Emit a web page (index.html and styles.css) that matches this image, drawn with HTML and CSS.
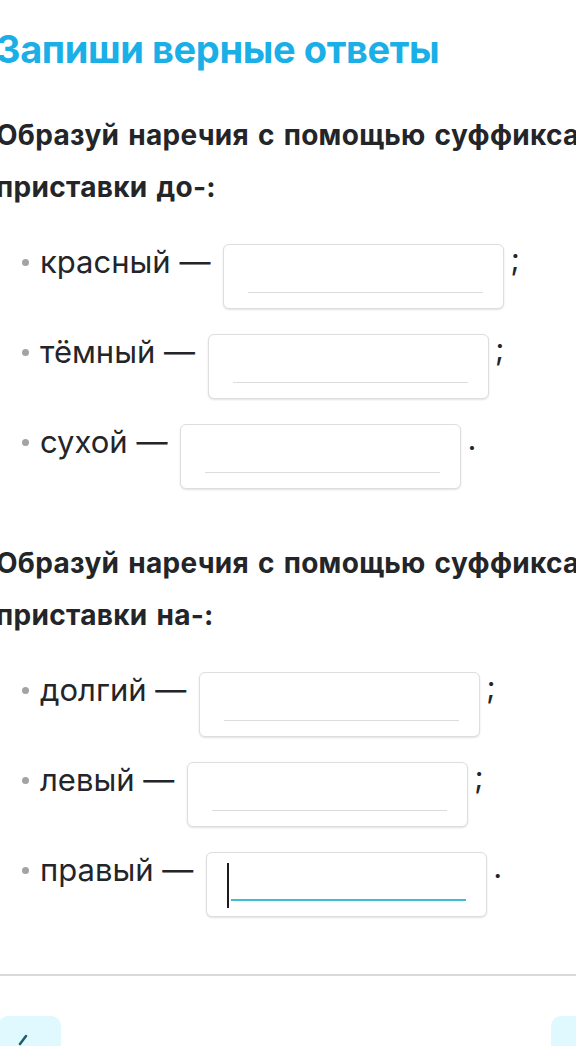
FILE: index.html
```html
<!DOCTYPE html>
<html lang="ru">
<head>
    <meta charset="UTF-8">
    <meta name="viewport" content="width=device-width, initial-scale=1.0">
    <title>Запиши верные ответы</title>
    <link rel="stylesheet" href="styles.css">
</head>
<body>
    <div class="task">
        <h1 class="task-title">Запиши верные ответы</h1>

        <p class="question">Образуй наречия с помощью суффикса -о и приставки до-:</p>
        <ul class="answers">
            <li class="answer">
                <span class="word">красный —</span>
                <span class="field"><span class="line"></span></span>
                <span class="punct">;</span>
            </li>
            <li class="answer">
                <span class="word">тёмный —</span>
                <span class="field"><span class="line"></span></span>
                <span class="punct">;</span>
            </li>
            <li class="answer">
                <span class="word">сухой —</span>
                <span class="field"><span class="line"></span></span>
                <span class="punct">.</span>
            </li>
        </ul>

        <p class="question q2">Образуй наречия с помощью суффикса -о и приставки на-:</p>
        <ul class="answers">
            <li class="answer">
                <span class="word">долгий —</span>
                <span class="field"><span class="line"></span></span>
                <span class="punct">;</span>
            </li>
            <li class="answer">
                <span class="word">левый —</span>
                <span class="field"><span class="line"></span></span>
                <span class="punct">;</span>
            </li>
            <li class="answer">
                <span class="word">правый —</span>
                <span class="field active"><span class="caret"></span><span class="line"></span></span>
                <span class="punct">.</span>
            </li>
        </ul>
    </div>

    <div class="footer">
        <div class="nav-btn prev">
            <svg width="20" height="20" viewBox="0 0 20 20"><path d="M14 4 L8 12" stroke="#1f5d6b" stroke-width="2.5" fill="none" stroke-linecap="round"/></svg>
        </div>
        <div class="nav-btn next"></div>
    </div>
</body>
</html>
```

FILE: styles.css
```css
body {
    margin: 0;
    background: #fff;
    font-family: Inter, "Noto Sans", sans-serif;
    color: #232529;
    overflow: hidden;
}

.task {
    margin-left: -4px;
    padding-top: 24px;
    width: 720px;
}

.task-title {
    margin: 0;
    font-size: 38px;
    font-weight: 700;
    line-height: 50px;
    color: #1aafe6;
    letter-spacing: -0.4px;
}

.question {
    margin: 35px 0 0 0;
    font-size: 28px;
    font-weight: 700;
    line-height: 52px;
    letter-spacing: 0.3px;
    word-spacing: 2px;
    width: 680px;
}

.question.q2 {
    margin-top: 48px;
}

.answers {
    list-style: none;
    margin: 31px 0 0 0;
    padding: 0 0 0 26px;
}

.answer {
    display: flex;
    align-items: flex-start;
    height: 65px;
    margin-bottom: 25px;
}

.answer:last-child {
    margin-bottom: 0;
}

.word {
    position: relative;
    padding-left: 18px;
    font-size: 31px;
    line-height: 36px;
    margin-right: 13px;
    white-space: nowrap;
}

.word::before {
    content: "";
    position: absolute;
    left: 0;
    top: 15px;
    width: 7px;
    height: 7px;
    border-radius: 50%;
    background: #a3a3a3;
}

.field {
    position: relative;
    box-sizing: border-box;
    flex: none;
    width: 281px;
    height: 65px;
    border: 1px solid #dedede;
    border-radius: 6px;
    box-shadow: 0 1px 2px rgba(0, 0, 0, 0.12);
    background: #fff;
}

.line {
    position: absolute;
    left: 24px;
    right: 20px;
    bottom: 15px;
    height: 1px;
    background: #dcdcdc;
}

.active .line {
    left: 24px;
    height: 2px;
    background: #3dbcd4;
}

.caret {
    position: absolute;
    left: 20px;
    top: 10px;
    width: 2px;
    height: 45px;
    background: #1c1c1c;
}

.punct {
    margin-left: 6px;
    font-size: 31px;
    line-height: 30px;
}

.footer {
    margin-top: 57px;
    border-top: 2px solid #d9d9d9;
    height: 70px;
    position: relative;
}

.nav-btn {
    position: absolute;
    top: 40px;
    width: 63px;
    height: 60px;
    border-radius: 10px;
    background: #e0f9fe;
}

.prev {
    left: -2px;
}

.prev svg {
    position: absolute;
    left: 14px;
    top: 16px;
}

.next {
    left: 551px;
}
```
